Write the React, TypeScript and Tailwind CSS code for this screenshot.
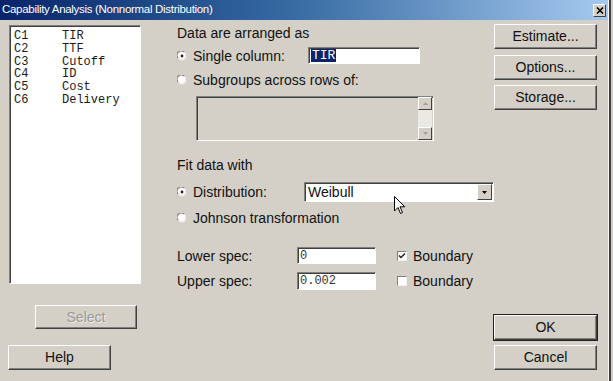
import React from "react";

const ui = { fontFamily: '"Liberation Sans", Arial, sans-serif' };
const mono = { fontFamily: '"Liberation Mono", "Courier New", monospace' };

function Radio({ checked }: { checked?: boolean }) {
  return (
    <svg width="10" height="10" viewBox="0 0 10 10" className="shrink-0">
      <circle cx="5" cy="5" r="4.2" fill="#ffffff" />
      <path d="M1.2 7.2 A4.2 4.2 0 0 1 7.2 1.2" fill="none" stroke="#808080" strokeWidth="1.1" />
      <path d="M7.2 1.2 A4.2 4.2 0 0 1 1.2 7.2" fill="none" stroke="#e8e8e8" strokeWidth="1.1" />
      {checked && <circle cx="5" cy="5" r="1.4" fill="#202020" />}
    </svg>
  );
}

function Check({ checked }: { checked?: boolean }) {
  return (
    <div className="w-[10px] h-[10px] bg-white border-t border-l border-[#808080] border-b border-r border-b-[#f0f0f0] border-r-[#f0f0f0] flex items-center justify-center shrink-0">
      {checked && (
        <svg width="8" height="8" viewBox="0 0 8 8">
          <path d="M1 3.5 L3 5.5 L7 1.5" fill="none" stroke="#222" strokeWidth="1.5" />
        </svg>
      )}
    </div>
  );
}

function Btn({
  children,
  className = "",
  disabled,
  def,
}: {
  children: React.ReactNode;
  className?: string;
  disabled?: boolean;
  def?: boolean;
}) {
  return (
    <div
      className={
        "flex items-center justify-center text-[14px] border border-t-white border-l-white border-b-[#404040] border-r-[#404040] shadow-[inset_-1px_-1px_#808080] bg-[#d4d0c8] " +
        (def ? "outline outline-1 outline-[#202020] " : "") +
        className
      }
      style={ui}
    >
      <span
        className={disabled ? "text-[#9a9893] [text-shadow:1px_1px_#ececec]" : "text-[#111]"}
      >
        {children}
      </span>
    </div>
  );
}

function Sunken({ className = "", children }: { className?: string; children?: React.ReactNode }) {
  return (
    <div
      className={
        "border border-t-[#808080] border-l-[#808080] border-b-white border-r-white shadow-[inset_1px_1px_#404040] " +
        className
      }
    >
      {children}
    </div>
  );
}

function Cursor() {
  return (
    <svg width="12" height="19" viewBox="0 0 12 19" className="absolute left-[394px] top-[196px]">
      <path
        d="M0.5 0.5 L0.5 15 L4 11.5 L6.5 17.5 L8.5 16.5 L6 10.8 L10.8 10.8 Z"
        fill="#ffffff"
        stroke="#000000"
        strokeWidth="1"
        strokeLinejoin="round"
      />
    </svg>
  );
}

const vars = [
  ["C1", "TIR"],
  ["C2", "TTF"],
  ["C3", "Cutoff"],
  ["C4", "ID"],
  ["C5", "Cost"],
  ["C6", "Delivery"],
];

export default function App() {
  return (
    <div className="relative w-[613px] h-[381px] bg-[#d4d0c8] flex overflow-hidden" style={ui}>
      <div className="w-[608px] flex flex-col">
        {/* title bar */}
        <div className="h-[20px] bg-linear-to-r from-[#0a246a] via-[#3a6ea5] to-[#a6caf0] flex items-center pl-[2px] pr-[2px]">
          <span className="text-white text-[11.5px] tracking-[-0.3px] flex-1 leading-none">
            Capability Analysis (Nonnormal Distribution)
          </span>
          <div className="w-[13px] h-[13px] bg-[#d4d0c8] border border-t-white border-l-white border-b-[#404040] border-r-[#404040] flex items-center justify-center">
            <svg width="8" height="7" viewBox="0 0 8 7">
              <path d="M1 0.5 L7 6.5 M7 0.5 L1 6.5" stroke="#000" strokeWidth="1.6" />
            </svg>
          </div>
        </div>

        <div className="flex flex-1">
          {/* left column */}
          <div className="w-[177px] flex flex-col pl-[9px]">
            <Sunken className="mt-[5px] w-[132px] h-[259px] bg-white pt-[4px] pl-[4px]">
              {vars.map(([c, n]) => (
                <div key={c} className="flex text-[12px] leading-[12.8px] text-[#1a1a1a]" style={mono}>
                  <span className="w-[48px]">{c}</span>
                  <span>{n}</span>
                </div>
              ))}
            </Sunken>
            <Btn disabled className="mt-[21px] ml-[26px] w-[102px] h-[24px]">
              Select
            </Btn>
            <Btn className="mt-[16px] -ml-[1px] w-[103px] h-[25px]">Help</Btn>
          </div>

          {/* middle column */}
          <div className="w-[317px] flex flex-col text-[14px] text-[#111]">
            <div className="mt-[6px] h-[14px] leading-[14px]">Data are arranged as</div>
            <div className="mt-[7px] h-[17px] flex items-center">
              <div className="w-[131px] flex items-center gap-[6px]">
                <Radio checked />
                <span className="leading-[14px]">Single column:</span>
              </div>
              <Sunken className="w-[112px] h-[17px] bg-white flex items-center pl-[2px]">
                <span className="bg-[#0a246a] text-white text-[13px] leading-[13px] px-[1px]" style={mono}>
                  TIR
                </span>
              </Sunken>
            </div>
            <div className="mt-[9px] h-[14px] flex items-center gap-[6px]">
              <Radio />
              <span className="leading-[14px]">Subgroups across rows of:</span>
            </div>
            <Sunken className="mt-[9px] ml-[19px] w-[238px] h-[45px] bg-[#d4d0c8] flex justify-end">
              <div className="w-[14px] h-full flex flex-col bg-[#ebe9e4] mr-[1px]">
                <div className="h-[13px] bg-[#d4d0c8] border border-t-white border-l-white border-b-[#404040] border-r-[#404040] flex items-center justify-center">
                  <svg width="5" height="3" viewBox="0 0 5 3">
                    <path d="M2.5 0 L5 3 L0 3 Z" fill="#a0a0a0" />
                  </svg>
                </div>
                <div className="flex-1" />
                <div className="h-[13px] bg-[#d4d0c8] border border-t-white border-l-white border-b-[#404040] border-r-[#404040] flex items-center justify-center">
                  <svg width="5" height="3" viewBox="0 0 5 3">
                    <path d="M0 0 L5 0 L2.5 3 Z" fill="#a0a0a0" />
                  </svg>
                </div>
              </div>
            </Sunken>
            <div className="mt-[17px] h-[14px] leading-[14px]">Fit data with</div>
            <div className="mt-[10px] h-[20px] flex items-center">
              <div className="w-[127px] flex items-center gap-[6px]">
                <Radio checked />
                <span className="leading-[14px]">Distribution:</span>
              </div>
              <Sunken className="w-[190px] h-[20px] bg-white flex items-center">
                <span className="flex-1 pl-[3px] leading-[14px]">Weibull</span>
                <div className="w-[15px] h-[16px] mr-[1px] bg-[#d4d0c8] border border-t-white border-l-white border-b-[#404040] border-r-[#404040] flex items-center justify-center">
                  <svg width="5" height="3" viewBox="0 0 5 3">
                    <path d="M0 0 L5 0 L2.5 3 Z" fill="#000" />
                  </svg>
                </div>
              </Sunken>
            </div>
            <div className="mt-[9px] h-[14px] flex items-center gap-[6px]">
              <Radio />
              <span className="leading-[14px]">Johnson transformation</span>
            </div>
            <div className="mt-[22px] h-[17px] flex items-center">
              <span className="w-[120px] leading-[14px]">Lower spec:</span>
              <Sunken className="w-[79px] h-[17px] bg-white flex items-center pl-[2px]">
                <span className="text-[12px] leading-[12px] text-[#333]" style={mono}>0</span>
              </Sunken>
              <div className="ml-[21px] flex items-center gap-[6px]">
                <Check checked />
                <span className="leading-[14px]">Boundary</span>
              </div>
            </div>
            <div className="mt-[8px] h-[18px] flex items-center">
              <span className="w-[120px] leading-[14px]">Upper spec:</span>
              <Sunken className="w-[79px] h-[18px] bg-white flex items-center pl-[2px]">
                <span className="text-[12px] leading-[12px] text-[#333]" style={mono}>0.002</span>
              </Sunken>
              <div className="ml-[21px] flex items-center gap-[6px]">
                <Check />
                <span className="leading-[14px]">Boundary</span>
              </div>
            </div>
          </div>

          {/* right column */}
          <div className="flex flex-col">
            <Btn className="mt-[4px] w-[103px] h-[25px]">Estimate...</Btn>
            <Btn className="mt-[6px] w-[103px] h-[25px]">Options...</Btn>
            <Btn className="mt-[5px] w-[103px] h-[25px]">Storage...</Btn>
            <Btn def className="mt-[205px] w-[103px] h-[25px]">OK</Btn>
            <Btn className="mt-[5px] w-[103px] h-[25px]">Cancel</Btn>
          </div>
        </div>
      </div>
      {/* right window frame */}
      <div className="w-[1px] bg-[#f4f4f4]" />
      <div className="w-[2px] bg-[#404040]" />
      <div className="w-[2px] bg-[#d4d0c8]" />
      <Cursor />
    </div>
  );
}
